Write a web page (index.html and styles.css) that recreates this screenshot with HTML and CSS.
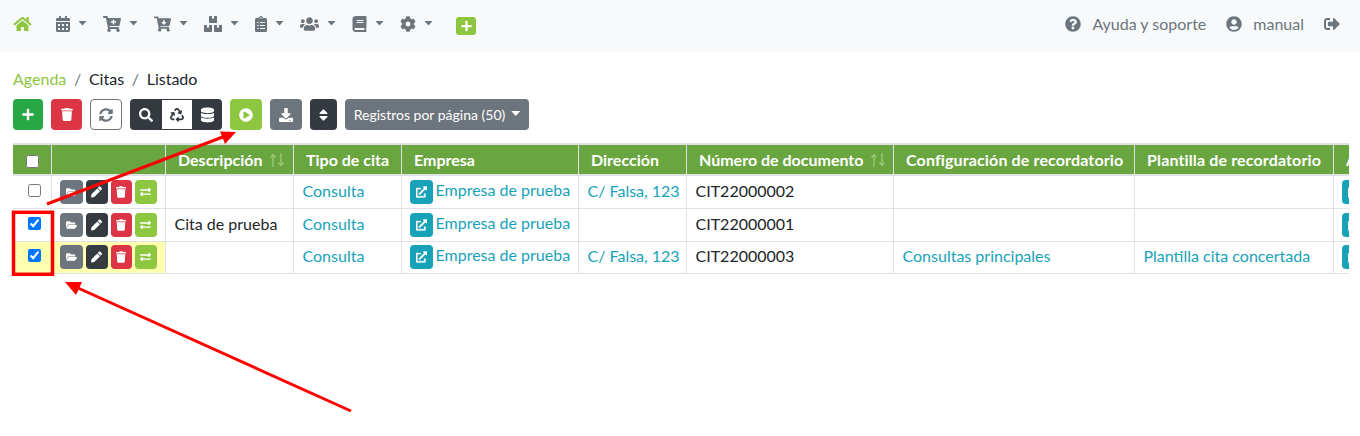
FILE: index.html
```html
<!DOCTYPE html>
<html lang="es">
<head>
<meta charset="utf-8">
<title>Citas</title>
<link rel="stylesheet" href="styles.css">
</head>
<body>
<svg class="defs" width="0" height="0">
<defs>
<symbol id="i-home" viewBox="0 0 576 512"><path d="M280.37 148.26L96 300.11V464a16 16 0 0 0 16 16l112.06-.29a16 16 0 0 0 15.92-16V368a16 16 0 0 1 16-16h64a16 16 0 0 1 16 16v95.64a16 16 0 0 0 16 16.05L464 480a16 16 0 0 0 16-16V300L295.67 148.26a12.19 12.19 0 0 0-15.3 0zM571.6 251.47L488 182.56V44.05a12 12 0 0 0-12-12h-56a12 12 0 0 0-12 12v72.61L318.47 43a48 48 0 0 0-61 0L4.34 251.47a12 12 0 0 0-1.6 16.9l25.5 31A12 12 0 0 0 45.15 301l235.22-193.74a12.19 12.19 0 0 1 15.3 0L530.9 301a12 12 0 0 0 16.9-1.6l25.5-31a12 12 0 0 0-1.7-16.93z"/></symbol>
<symbol id="i-plus" viewBox="0 0 448 512"><path d="M416 208H272V64c0-17.67-14.33-32-32-32h-32c-17.67 0-32 14.33-32 32v144H32c-17.67 0-32 14.33-32 32v32c0 17.67 14.33 32 32 32h144v144c0 17.67 14.33 32 32 32h32c17.67 0 32-14.33 32-32V304h144c17.67 0 32-14.33 32-32v-32c0-17.67-14.33-32-32-32z"/></symbol>
<symbol id="i-trash" viewBox="0 0 448 512"><path d="M432 32H312l-9.4-18.7A24 24 0 0 0 281.1 0H166.8a23.72 23.72 0 0 0-21.4 13.3L136 32H16A16 16 0 0 0 0 48v32a16 16 0 0 0 16 16h416a16 16 0 0 0 16-16V48a16 16 0 0 0-16-16zM53.2 467a48 48 0 0 0 47.9 45h245.8a48 48 0 0 0 47.9-45L416 128H32z"/></symbol>
<symbol id="i-search" viewBox="0 0 512 512"><path d="M505 442.7L405.3 343c-4.5-4.5-10.6-7-17-7H372c27.6-35.3 44-79.7 44-128C416 93.1 322.9 0 208 0S0 93.1 0 208s93.1 208 208 208c48.3 0 92.7-16.4 128-44v16.3c0 6.4 2.5 12.5 7 17l99.7 99.7c9.4 9.4 24.6 9.4 33.9 0l28.3-28.3c9.4-9.4 9.4-24.6.1-34zM208 336c-70.7 0-128-57.2-128-128 0-70.7 57.2-128 128-128 70.7 0 128 57.2 128 128 0 70.7-57.2 128-128 128z"/></symbol>
<symbol id="i-cog" viewBox="0 0 512 512"><path d="M487.4 315.7l-42.6-24.6c4.3-23.2 4.3-47 0-70.2l42.6-24.6c4.9-2.8 7.1-8.6 5.5-14-11.1-35.6-30-67.8-54.7-94.6-3.8-4.1-10-5.1-14.8-2.3L380.8 110c-17.9-15.4-38.5-27.3-60.8-35.1V25.8c0-5.6-3.9-10.5-9.4-11.7-36.7-8.2-74.3-7.8-109.2 0-5.5 1.2-9.4 6.1-9.4 11.7V75c-22.2 7.9-42.8 19.8-60.8 35.1L88.7 85.5c-4.9-2.8-11-1.9-14.8 2.3-24.7 26.7-43.6 58.9-54.7 94.6-1.7 5.4.6 11.2 5.5 14L67.3 221c-4.3 23.2-4.3 47 0 70.2l-42.6 24.6c-4.9 2.8-7.1 8.6-5.5 14 11.1 35.6 30 67.8 54.7 94.6 3.8 4.1 10 5.1 14.8 2.3l42.6-24.6c17.9 15.4 38.5 27.3 60.8 35.1v49.2c0 5.6 3.9 10.5 9.4 11.7 36.7 8.2 74.3 7.8 109.2 0 5.5-1.2 9.4-6.1 9.4-11.7v-49.2c22.2-7.9 42.8-19.8 60.8-35.1l42.6 24.6c4.9 2.8 11 1.9 14.8-2.3 24.7-26.7 43.6-58.9 54.7-94.6 1.5-5.5-.7-11.3-5.6-14.1zM256 336c-44.1 0-80-35.9-80-80s35.9-80 80-80 80 35.9 80 80-35.9 80-80 80z"/></symbol>
<symbol id="i-question" viewBox="0 0 512 512"><path d="M504 256c0 136.997-111.043 248-248 248S8 392.997 8 256C8 119.083 119.043 8 256 8s248 111.083 248 248zM262.655 90c-54.497 0-89.255 22.957-116.549 63.758-3.536 5.286-2.353 12.415 2.715 16.258l34.699 26.31c5.205 3.947 12.621 3.008 16.665-2.122 17.864-22.658 30.113-35.797 57.303-35.797 20.429 0 45.698 13.148 45.698 32.958 0 14.976-12.363 22.667-32.534 33.976C247.128 238.528 216 254.941 216 296v4c0 6.627 5.373 12 12 12h56c6.627 0 12-5.373 12-12v-1.333c0-28.462 83.186-29.647 83.186-106.667 0-58.002-60.165-102-116.531-102zM256 338c-25.365 0-46 20.635-46 46 0 25.364 20.635 46 46 46s46-20.636 46-46c0-25.365-20.635-46-46-46z"/></symbol>
<symbol id="i-user" viewBox="0 0 496 512"><path d="M248 8C111 8 0 119 0 256s111 248 248 248 248-111 248-248S385 8 248 8zm0 96c48.6 0 88 39.4 88 88s-39.4 88-88 88-88-39.4-88-88 39.4-88 88-88zm0 344c-58.7 0-111.3-26.6-146.5-68.2 18.8-35.4 55.6-59.8 98.5-59.8 2.4 0 4.8.4 7.1 1.1 13 4.2 26.6 6.9 40.9 6.9 14.3 0 28-2.7 40.9-6.9 2.3-.7 4.7-1.1 7.1-1.1 42.9 0 79.7 24.4 98.5 59.8C359.3 421.4 306.7 448 248 448z"/></symbol>
<symbol id="i-signout" viewBox="0 0 512 512"><path d="M497 273L329 441c-15 15-41 4.5-41-17v-96H152c-13.3 0-24-10.7-24-24v-96c0-13.3 10.7-24 24-24h136V88c0-21.4 25.9-32 41-17l168 168c9.3 9.4 9.3 24.6 0 34zM192 436v-40c0-6.6-5.4-12-12-12H96c-17.7 0-32-14.3-32-32V160c0-17.7 14.3-32 32-32h84c6.6 0 12-5.4 12-12V76c0-6.6-5.4-12-12-12H96c-53 0-96 43-96 96v192c0 53 43 96 96 96h84c6.6 0 12-5.4 12-12z"/></symbol>
<symbol id="i-exchange" viewBox="0 0 512 512"><path d="M0 168v-16c0-13.255 10.745-24 24-24h360V80c0-21.367 25.899-32.042 40.971-16.971l80 80c9.372 9.373 9.372 24.569 0 33.941l-80 80C409.956 271.982 384 261.456 384 240v-48H24c-13.255 0-24-10.745-24-24zm488 152H128v-48c0-21.314-25.862-32.08-40.971-16.971l-80 80c-9.372 9.373-9.372 24.569 0 33.941l80 80C102.057 463.997 128 453.437 128 432v-48h360c13.255 0 24-10.745 24-24v-16c0-13.255-10.745-24-24-24z"/></symbol>
<symbol id="i-pencil" viewBox="0 0 512 512"><path d="M497.9 142.1l-46.1 46.1c-4.7 4.7-12.3 4.7-17 0l-111-111c-4.7-4.7-4.7-12.3 0-17l46.1-46.1c18.7-18.7 49.1-18.7 67.9 0l60.1 60.1c18.8 18.7 18.8 49.1 0 67.9zM284.2 99.8L21.6 362.4.4 483.9c-2.9 16.4 11.4 30.6 27.8 27.8l121.5-21.3 262.6-262.6c4.7-4.7 4.7-12.3 0-17l-111-111c-4.8-4.7-12.4-4.7-17.1 0z"/></symbol>
<symbol id="i-folder" viewBox="0 0 576 512"><path d="M572.694 292.093L500.27 416.248A63.997 63.997 0 0 1 444.989 448H45.025c-18.523 0-30.064-20.093-20.731-36.093l72.424-124.155A64 64 0 0 1 152 256h399.964c18.523 0 30.064 20.093 20.73 36.093zM152 224h328v-48c0-26.51-21.49-48-48-48H272l-64-64H48C21.49 64 0 85.49 0 112v278.046l69.077-118.418C86.214 242.25 117.989 224 152 224z"/></symbol>
<symbol id="i-link" viewBox="0 0 512 512"><path stroke="currentColor" stroke-width="16" d="M432 320H400a16 16 0 0 0-16 16V448H64V128H208a16 16 0 0 0 16-16V80a16 16 0 0 0-16-16H48A48 48 0 0 0 0 112V464a48 48 0 0 0 48 48H400a48 48 0 0 0 48-48V336A16 16 0 0 0 432 320ZM488 0h-128c-21.37 0-32.05 25.91-17 41l35.73 35.73L135 320.37a24 24 0 0 0 0 34L157.67 377a24 24 0 0 0 34 0L435.28 133.32 471 169c15 15 41 4.5 41-17V24A24 24 0 0 0 488 0Z"/></symbol>
<symbol id="i-sync" viewBox="0 0 512 512"><path d="M370.72 133.28C339.458 104.008 298.888 87.962 255.848 88c-77.458.068-144.328 53.178-162.791 126.85-1.344 5.363-6.122 9.15-11.651 9.15H24.103c-7.498 0-13.194-6.807-11.807-14.176C33.933 94.924 134.813 8 256 8c66.448 0 126.791 26.136 171.315 68.685L463.03 40.97C478.149 25.851 504 36.559 504 57.941V192c0 13.255-10.745 24-24 24H345.941c-21.382 0-32.09-25.851-16.971-40.971l41.75-41.749zM32 296h134.059c21.382 0 32.09 25.851 16.971 40.971l-41.75 41.75c31.262 29.273 71.835 45.319 114.876 45.28 77.418-.07 144.315-53.144 162.787-126.849 1.344-5.363 6.122-9.15 11.651-9.15h57.304c7.498 0 13.194 6.807 11.807 14.176C478.067 417.076 377.187 504 256 504c-66.448 0-126.791-26.136-171.315-68.685L48.97 471.03C33.851 486.149 8 475.441 8 454.059V320c0-13.255 10.745-24 24-24z"/></symbol>
<symbol id="i-play" viewBox="0 0 512 512"><path d="M256 8C119 8 8 119 8 256s111 248 248 248 248-111 248-248S393 8 256 8zm115.7 272l-176 101c-15.8 8.8-35.7-2.5-35.7-21V152c0-18.4 19.8-29.8 35.7-21l176 107c16.4 9.2 16.4 32.9 0 42z"/></symbol>
<symbol id="i-db" viewBox="0 0 448 512"><path d="M448 73.143v45.714C448 159.143 347.667 192 224 192S0 159.143 0 118.857V73.143C0 32.857 100.333 0 224 0s224 32.857 224 73.143zM448 176v102.857C448 319.143 347.667 352 224 352S0 319.143 0 278.857V176c48.125 33.143 136.208 48.572 224 48.572S399.874 209.143 448 176zm0 160v102.857C448 479.143 347.667 512 224 512S0 479.143 0 438.857V336c48.125 33.143 136.208 48.572 224 48.572S399.874 369.143 448 336z"/></symbol>
<symbol id="i-download" viewBox="0 0 512 512"><path d="M216 0h80c13.3 0 24 10.7 24 24v168h87.7c17.8 0 26.7 21.5 14.1 34.1L269.7 378.3c-7.5 7.5-19.8 7.5-27.3 0L90.1 226.1c-12.6-12.6-3.7-34.1 14.1-34.1H192V24c0-13.3 10.7-24 24-24zm296 376v112c0 13.3-10.7 24-24 24H24c-13.3 0-24-10.7-24-24V376c0-13.3 10.7-24 24-24h146.7l49 49c20.1 20.1 52.5 20.1 72.6 0l49-49H488c13.3 0 24 10.7 24 24zm-124 88c0-11-9-20-20-20s-20 9-20 20 9 20 20 20 20-9 20-20zm64 0c0-11-9-20-20-20s-20 9-20 20 9 20 20 20 20-9 20-20z"/></symbol>
<symbol id="i-sort" viewBox="0 0 320 512"><path d="M41 288h238c21.4 0 32.1 25.9 17 41L177 448c-9.4 9.4-24.6 9.4-33.9 0L24 329c-15.1-15.1-4.4-41 17-41zm255-105L177 64c-9.4-9.4-24.6-9.4-33.9 0L24 183c-15.1 15.1-4.4 41 17 41h238c21.4 0 32.1-25.9 17-41z"/></symbol>
<symbol id="i-users" viewBox="0 0 640 512"><path d="M96 224c35.3 0 64-28.7 64-64s-28.7-64-64-64-64 28.7-64 64 28.7 64 64 64zm448 0c35.3 0 64-28.7 64-64s-28.7-64-64-64-64 28.7-64 64 28.7 64 64 64zm32 32h-64c-17.6 0-33.5 7.1-45.1 18.6 40.3 22.1 68.9 62 75.1 109.4h66c17.7 0 32-14.3 32-32v-32c0-35.3-28.7-64-64-64zm-256 0c61.9 0 112-50.1 112-112S381.9 32 320 32 208 82.1 208 144s50.1 112 112 112zm76.8 32h-8.3c-20.8 10-43.9 16-68.5 16s-47.6-6-68.5-16h-8.3C179.6 288 128 339.6 128 403.2V432c0 26.5 21.5 48 48 48h288c26.5 0 48-21.5 48-48v-28.8c0-63.6-51.6-115.2-115.2-115.2zm-223.7-13.4C161.5 263.1 145.6 256 128 256H64c-35.3 0-64 28.7-64 64v32c0 17.7 14.3 32 32 32h65.9c6.3-47.4 34.9-87.3 75.2-109.4z"/></symbol>
<symbol id="i-book" viewBox="0 0 448 512"><path d="M448 360V24c0-13.3-10.7-24-24-24H96C43 0 0 43 0 96v320c0 53 43 96 96 96h328c13.3 0 24-10.7 24-24v-16c0-7.5-3.5-14.3-8.9-18.7-4.2-15.4-4.2-59.3 0-74.7 5.4-4.3 8.9-11.1 8.9-18.6zM128 134c0-3.3 2.7-6 6-6h212c3.3 0 6 2.7 6 6v20c0 3.3-2.7 6-6 6H134c-3.3 0-6-2.7-6-6v-20zm0 64c0-3.3 2.7-6 6-6h212c3.3 0 6 2.7 6 6v20c0 3.3-2.7 6-6 6H134c-3.3 0-6-2.7-6-6v-20zm253.4 250H96c-17.7 0-32-14.3-32-32 0-17.6 14.4-32 32-32h285.4c-1.9 17.1-1.9 46.9 0 64z"/></symbol>
<symbol id="i-clip" viewBox="0 0 384 512"><path d="M336 64h-80c0-35.3-28.7-64-64-64s-64 28.7-64 64H48C21.5 64 0 85.5 0 112v352c0 26.5 21.5 48 48 48h288c26.5 0 48-21.5 48-48V112c0-26.5-21.5-48-48-48zM96 424c-13.3 0-24-10.7-24-24s10.7-24 24-24 24 10.7 24 24-10.7 24-24 24zm0-96c-13.3 0-24-10.7-24-24s10.7-24 24-24 24 10.7 24 24-10.7 24-24 24zm0-96c-13.3 0-24-10.7-24-24s10.7-24 24-24 24 10.7 24 24-10.7 24-24 24zm96-192c13.3 0 24 10.7 24 24s-10.7 24-24 24-24-10.7-24-24 10.7-24 24-24zm128 368c0 4.4-3.6 8-8 8H168c-4.4 0-8-3.6-8-8v-16c0-4.4 3.6-8 8-8h144c4.4 0 8 3.6 8 8v16zm0-96c0 4.4-3.6 8-8 8H168c-4.4 0-8-3.6-8-8v-16c0-4.4 3.6-8 8-8h144c4.4 0 8 3.6 8 8v16zm0-96c0 4.4-3.6 8-8 8H168c-4.4 0-8-3.6-8-8v-16c0-4.4 3.6-8 8-8h144c4.4 0 8 3.6 8 8v16z"/></symbol>
<symbol id="i-cal" viewBox="0 0 448 512"><path d="M0 464c0 26.5 21.5 48 48 48h352c26.5 0 48-21.5 48-48V192H0v272zm320-196c0-6.6 5.4-12 12-12h40c6.6 0 12 5.4 12 12v40c0 6.6-5.4 12-12 12h-40c-6.6 0-12-5.4-12-12v-40zm0 128c0-6.6 5.4-12 12-12h40c6.6 0 12 5.4 12 12v40c0 6.6-5.4 12-12 12h-40c-6.6 0-12-5.4-12-12v-40zM192 268c0-6.6 5.4-12 12-12h40c6.6 0 12 5.4 12 12v40c0 6.6-5.4 12-12 12h-40c-6.6 0-12-5.4-12-12v-40zm0 128c0-6.6 5.4-12 12-12h40c6.6 0 12 5.4 12 12v40c0 6.6-5.4 12-12 12h-40c-6.6 0-12-5.4-12-12v-40zM64 268c0-6.6 5.4-12 12-12h40c6.6 0 12 5.4 12 12v40c0 6.6-5.4 12-12 12H76c-6.6 0-12-5.4-12-12v-40zm0 128c0-6.6 5.4-12 12-12h40c6.6 0 12 5.4 12 12v40c0 6.6-5.4 12-12 12H76c-6.6 0-12-5.4-12-12v-40zM400 64h-48V16c0-8.8-7.2-16-16-16h-32c-8.8 0-16 7.2-16 16v48H160V16c0-8.8-7.2-16-16-16h-32c-8.8 0-16 7.2-16 16v48H48C21.5 64 0 85.5 0 112v48h448v-48c0-26.5-21.5-48-48-48z"/></symbol>
<symbol id="i-cartplus" viewBox="0 0 576 512"><path d="M504.717 320H211.572l6.545 32h268.418c15.401 0 26.816 14.301 23.403 29.319l-5.517 24.276C523.112 414.668 536 433.828 536 456c0 31.202-25.519 56.444-56.824 55.994-29.823-.429-54.35-24.631-55.155-54.447-.44-16.287 6.085-31.049 16.803-41.548H231.176C241.553 426.165 248 440.326 248 456c0 31.813-26.528 57.431-58.67 55.938-28.54-1.325-51.751-24.385-53.251-52.917-1.158-22.034 10.436-41.455 28.051-51.586L93.883 64H24C10.745 64 0 53.255 0 40V24C0 10.745 10.745 0 24 0h102.529c11.401 0 21.228 8.021 23.513 19.19L159.208 64H551.99c15.401 0 26.816 14.301 23.403 29.319l-47.273 208C525.637 312.246 515.923 320 504.717 320zM408 168h-48v-40c0-8.837-7.163-16-16-16h-16c-8.837 0-16 7.163-16 16v40h-48c-8.837 0-16 7.163-16 16v16c0 8.837 7.163 16 16 16h48v40c0 8.837 7.163 16 16 16h16c8.837 0 16-7.163 16-16v-40h48c8.837 0 16-7.163 16-16v-16c0-8.837-7.163-16-16-16z"/></symbol>
<symbol id="i-cartdown" viewBox="0 0 576 512"><path d="M504.717 320H211.572l6.545 32h268.418c15.401 0 26.816 14.301 23.403 29.319l-5.517 24.276C523.112 414.668 536 433.828 536 456c0 31.202-25.519 56.444-56.824 55.994-29.823-.429-54.35-24.631-55.155-54.447-.44-16.287 6.085-31.049 16.803-41.548H231.176C241.553 426.165 248 440.326 248 456c0 31.813-26.528 57.431-58.67 55.938-28.54-1.325-51.751-24.385-53.251-52.917-1.158-22.034 10.436-41.455 28.051-51.586L93.883 64H24C10.745 64 0 53.255 0 40V24C0 10.745 10.745 0 24 0h102.529c11.401 0 21.228 8.021 23.513 19.19L159.208 64H551.99c15.401 0 26.816 14.301 23.403 29.319l-47.273 208C525.637 312.246 515.923 320 504.717 320zM403.029 192H360v-60c0-6.627-5.373-12-12-12h-24c-6.627 0-12 5.373-12 12v60h-43.029c-10.691 0-16.045 12.926-8.485 20.485l67.029 67.029c4.686 4.686 12.284 4.686 16.971 0l67.029-67.029c7.559-7.559 2.205-20.485-8.486-20.485z"/></symbol>
<symbol id="i-boxes" viewBox="0 0 576 512"><path d="M560 288h-80v96l-32-21.3-32 21.3v-96h-80c-8.8 0-16 7.2-16 16v192c0 8.8 7.2 16 16 16h224c8.8 0 16-7.2 16-16V304c0-8.8-7.2-16-16-16zm-384-64h224c8.8 0 16-7.2 16-16V16c0-8.8-7.2-16-16-16h-80v96l-32-21.3L256 96V0h-80c-8.8 0-16 7.2-16 16v192c0 8.8 7.2 16 16 16zm64 64h-80v96l-32-21.3L96 384v-96H16c-8.8 0-16 7.2-16 16v192c0 8.8 7.2 16 16 16h224c8.8 0 16-7.2 16-16V304c0-8.8-7.2-16-16-16z"/></symbol>
<symbol id="i-recycle" viewBox="0 0 512 512"><path d="M184.561 261.903c3.232 13.997-12.123 24.635-24.068 17.168l-40.736-25.455-50.867 81.402C55.606 356.273 70.96 384 96.012 384H148c6.627 0 12 5.373 12 12v40c0 6.627-5.373 12-12 12H96.115c-75.334 0-121.302-83.048-81.408-146.88l50.822-81.388-40.725-25.448c-12.081-7.547-8.966-25.961 4.879-29.158l110.237-25.45c8.611-1.988 17.201 3.381 19.189 11.99l25.452 110.237zm98.561-182.915l41.289 66.076-40.74 25.457c-12.051 7.528-9 25.953 4.879 29.158l110.237 25.45c8.672 1.999 17.215-3.438 19.189-11.99l25.45-110.237c3.197-13.844-11.99-24.719-24.068-17.168l-40.687 25.424-41.263-66.082c-37.521-60.033-125.209-60.171-162.816 0l-17.963 28.766c-3.51 5.62-1.8 13.021 3.82 16.533l33.919 21.195c5.62 3.512 13.024 1.803 16.536-3.817l17.961-28.743c12.712-20.341 41.973-19.676 54.257-.022zM497.288 301.12l-27.515-44.065c-3.511-5.623-10.916-7.334-16.538-3.821l-33.861 21.159c-5.62 3.512-7.33 10.915-3.818 16.536l27.564 44.112c13.257 21.211-2.057 48.96-27.136 48.96H320V336.02c0-14.213-17.242-21.383-27.313-11.313l-80 79.981c-6.249 6.248-6.249 16.379 0 22.627l80 79.989C302.689 517.308 320 510.3 320 495.989V448h95.88c75.274 0 121.335-82.997 81.408-146.88z"/></symbol>
<symbol id="i-updown" viewBox="0 0 16 16"><path d="M4 15V3M1.500 5.500L4 2.500l2.500 3M12 1v12M9.500 10.500l2.500 3 2.500-3" fill="none" stroke="currentColor" stroke-width="1.300"/></symbol>
</defs>
</svg>

<nav class="navbar">
  <a class="nav-home"><svg class="ic w19 green"><use href="#i-home"/></svg></a>
  <a class="nav-item"><svg class="ic w14"><use href="#i-cal"/></svg><span class="caret"></span></a>
  <a class="nav-item"><svg class="ic w18"><use href="#i-cartplus"/></svg><span class="caret"></span></a>
  <a class="nav-item"><svg class="ic w17"><use href="#i-cartdown"/></svg><span class="caret"></span></a>
  <a class="nav-item"><svg class="ic w18"><use href="#i-boxes"/></svg><span class="caret"></span></a>
  <a class="nav-item"><svg class="ic w12t"><use href="#i-clip"/></svg><span class="caret"></span></a>
  <a class="nav-item"><svg class="ic w19"><use href="#i-users"/></svg><span class="caret"></span></a>
  <a class="nav-item"><svg class="ic w15"><use href="#i-book"/></svg><span class="caret"></span></a>
  <a class="nav-item"><svg class="ic w16"><use href="#i-cog"/></svg><span class="caret"></span></a>
  <a class="nav-add"><svg class="ic w11 white"><use href="#i-plus"/></svg></a>
  <div class="nav-right">
    <a class="nav-link"><svg class="ic w16"><use href="#i-question"/></svg><span>Ayuda y soporte</span></a>
    <a class="nav-link"><svg class="ic w16"><use href="#i-user"/></svg><span>manual</span></a>
    <a class="nav-out"><svg class="ic w16"><use href="#i-signout"/></svg></a>
  </div>
</nav>

<main class="content">
  <ol class="breadcrumb">
    <li class="crumb-first">Agenda</li>
    <li>Citas</li>
    <li>Listado</li>
  </ol>

  <div class="toolbar">
    <button class="btn btn-success b30"><svg class="ic w12"><use href="#i-plus"/></svg></button>
    <button class="btn btn-danger b31"><svg class="ic w12"><use href="#i-trash"/></svg></button>
    <button class="btn btn-outline b32"><svg class="ic w14"><use href="#i-sync"/></svg></button>
    <div class="btn-group">
      <button class="btn btn-dark b32"><svg class="ic w14"><use href="#i-search"/></svg></button>
      <button class="btn btn-light b30"><svg class="ic w14"><use href="#i-recycle"/></svg></button>
      <button class="btn btn-dark b30"><svg class="ic w13"><use href="#i-db"/></svg></button>
    </div>
    <button class="btn btn-lime b32"><svg class="ic w14"><use href="#i-play"/></svg></button>
    <button class="btn btn-gray b32"><svg class="ic w14"><use href="#i-download"/></svg></button>
    <button class="btn btn-dark b27"><svg class="ic w9"><use href="#i-sort"/></svg></button>
    <button class="btn btn-gray btn-text">Registros por página (50)<span class="caret caret-white"></span></button>
  </div>

  <div class="table-wrap">
    <table class="grid">
      <colgroup>
        <col class="c1"><col class="c2"><col class="c3"><col class="c4"><col class="c5"><col class="c6"><col class="c7"><col class="c8"><col class="c9"><col class="c10">
      </colgroup>
      <thead>
        <tr>
          <th class="th-check"><input type="checkbox" class="check"></th>
          <th></th>
          <th>Descripción <svg class="sorter"><use href="#i-updown"/></svg></th>
          <th>Tipo de cita</th>
          <th>Empresa</th>
          <th>Dirección</th>
          <th>Número de documento <svg class="sorter"><use href="#i-updown"/></svg></th>
          <th class="th-wide">Configuración de recordatorio</th>
          <th class="th-wide">Plantilla de recordatorio</th>
          <th>Acciones</th>
        </tr>
      </thead>
      <tbody>
        <tr class="row1">
          <td class="td-check"><input type="checkbox" class="check"></td>
          <td><div class="acts"><span class="act a-gray"><svg class="ic w11"><use href="#i-folder"/></svg></span><span class="act a-dark"><svg class="ic w11"><use href="#i-pencil"/></svg></span><span class="act a-red"><svg class="ic w10"><use href="#i-trash"/></svg></span><span class="act a-lime"><svg class="ic w11"><use href="#i-exchange"/></svg></span></div></td>
          <td></td>
          <td><a class="lnk">Consulta</a></td>
          <td><div class="co"><span class="act a-info"><svg class="ic w11"><use href="#i-link"/></svg></span><a class="lnk lnk-up">Empresa de prueba</a></div></td>
          <td><a class="lnk">C/ Falsa, 123</a></td>
          <td>CIT22000002</td>
          <td></td>
          <td></td>
          <td><span class="act a-info"><svg class="ic w11"><use href="#i-link"/></svg></span></td>
        </tr>
        <tr class="row2">
          <td class="td-check"><input type="checkbox" class="check" checked></td>
          <td><div class="acts"><span class="act a-gray"><svg class="ic w11"><use href="#i-folder"/></svg></span><span class="act a-dark"><svg class="ic w11"><use href="#i-pencil"/></svg></span><span class="act a-red"><svg class="ic w10"><use href="#i-trash"/></svg></span><span class="act a-lime"><svg class="ic w11"><use href="#i-exchange"/></svg></span></div></td>
          <td>Cita de prueba</td>
          <td><a class="lnk">Consulta</a></td>
          <td><div class="co"><span class="act a-info"><svg class="ic w11"><use href="#i-link"/></svg></span><a class="lnk lnk-up">Empresa de prueba</a></div></td>
          <td></td>
          <td>CIT22000001</td>
          <td></td>
          <td></td>
          <td><span class="act a-info"><svg class="ic w11"><use href="#i-link"/></svg></span></td>
        </tr>
        <tr class="row3">
          <td class="td-check hl"><input type="checkbox" class="check" checked></td>
          <td class="hl"><div class="acts"><span class="act a-gray"><svg class="ic w11"><use href="#i-folder"/></svg></span><span class="act a-dark"><svg class="ic w11"><use href="#i-pencil"/></svg></span><span class="act a-red"><svg class="ic w10"><use href="#i-trash"/></svg></span><span class="act a-lime"><svg class="ic w11"><use href="#i-exchange"/></svg></span></div></td>
          <td></td>
          <td><a class="lnk">Consulta</a></td>
          <td><div class="co"><span class="act a-info"><svg class="ic w11"><use href="#i-link"/></svg></span><a class="lnk lnk-up">Empresa de prueba</a></div></td>
          <td><a class="lnk">C/ Falsa, 123</a></td>
          <td>CIT22000003</td>
          <td><a class="lnk">Consultas principales</a></td>
          <td><a class="lnk">Plantilla cita concertada</a></td>
          <td><span class="act a-info"><svg class="ic w11"><use href="#i-link"/></svg></span></td>
        </tr>
      </tbody>
    </table>
  </div>
</main>

<svg class="annot" viewBox="0 0 1360 436" width="1360" height="436">
  <rect x="13.500" y="212.300" width="39" height="62" fill="none" stroke="#f00" stroke-width="3.500"/>
  <path d="M47 204L224 136.500" stroke="#f00" stroke-width="3" fill="none"/>
  <path d="M236 132L220 131.500L225 144Z" fill="#f00"/>
  <path d="M351 411L78 288" stroke="#f00" stroke-width="3" fill="none"/>
  <path d="M65 282L82 282L76 295Z" fill="#f00"/>
</svg>
</body>
</html>
```

FILE: styles.css
```css
* { box-sizing: border-box; }
html, body { margin: 0; padding: 0; }
body {
  width: 1360px;
  height: 436px;
  overflow: hidden;
  position: relative;
  background: #fff;
  color: #212529;
  font-family: Lato, "Liberation Sans", sans-serif;
  font-size: 16px;
}
.defs { position: absolute; }
.ic { display: block; height: 16px; fill: currentColor; flex: none; }
.w9 { width: 9px; } .w10 { width: 10px; height: 12px; } .w11 { width: 11px; height: 12px; }
.w12 { width: 12px; height: 13px; } .w12t { width: 12px; } .w13 { width: 13px; } .w14 { width: 14px; }
.w15 { width: 15px; } .w16 { width: 16px; } .w17 { width: 17px; } .w18 { width: 18px; } .w19 { width: 19px; } .w20 { width: 20px; }
.green { color: #8dc63f; }
.white { color: #fff; }

.navbar {
  height: 52px;
  background: #f8f9fa;
  display: flex;
  align-items: center;
  padding: 0 20px 4px 13px;
  color: #6c757d;
}
.nav-home { margin-right: 24px; }
.nav-item { display: flex; align-items: center; margin-right: 16px; }
.caret {
  display: inline-block;
  margin-left: 8px;
  width: 9px;
  height: 5px;
  background: #6c757d;
  clip-path: polygon(0 0, 100% 0, 50% 100%);
  margin-top: -2px;
}
.nav-add {
  margin-left: 7px;
  width: 20px;
  height: 18px;
  margin-top: 4px;
  background: #8dc63f;
  border-radius: 3px;
  display: flex;
  align-items: center;
  justify-content: center;
}
.nav-right { margin-left: auto; display: flex; align-items: center; }
.nav-link { display: flex; align-items: center; gap: 11px; margin-right: 20px; font-size: 16px; }
.nav-link span { margin-top: -2px; }

.content { padding: 0 13px; }
.breadcrumb {
  list-style: none;
  margin: 0;
  padding: 17px 0 0;
  height: 47px;
  display: flex;
  line-height: 19px;
  font-size: 16px;
}
.breadcrumb li + li::before { content: "/"; color: #6c757d; padding: 0 7.700px; }
.crumb-first { color: #8dc63f; }

.toolbar { display: flex; gap: 8px; height: 31px; }
.btn {
  border: 0;
  height: 31px;
  padding: 0;
  border-radius: 4px;
  display: flex;
  align-items: center;
  justify-content: center;
  color: #fff;
  font: inherit;
}
.b27 { width: 27px; } .b30 { width: 30px; } .b31 { width: 31px; } .b32 { width: 32px; }
.btn-success { background: #28a745; }
.btn-danger { background: #dc3545; }
.btn-outline { background: #fff; border: 1px solid #6c757d; color: #6c757d; }
.btn-dark { background: #343a40; }
.btn-light { background: #fff; color: #343a40; border-radius: 0; border-top: 1px solid #343a40; border-bottom: 1px solid #343a40; }
.btn-lime { background: #8dc63f; }
.btn-gray { background: #6c757d; }
.btn-text { width: 184px; font-size: 14px; }
.caret-white { background: #fff; margin-left: 6px; }
.btn-group { display: flex; }
.btn-group .btn:first-child { border-radius: 4px 0 0 4px; }
.btn-group .btn:last-child { border-radius: 0 4px 4px 0; }

.table-wrap { margin-top: 13px; width: 1336px; overflow: hidden; }
.grid {
  border-collapse: collapse;
  table-layout: fixed;
  width: 1500px;
}
.c1 { width: 38px; } .c2 { width: 114px; } .c3 { width: 128px; } .c4 { width: 108px; }
.c5 { width: 177px; } .c6 { width: 108px; } .c7 { width: 207px; } .c8 { width: 241px; }
.c9 { width: 199px; } .c10 { width: 180px; }
.grid th {
  background: #6aa63f;
  color: #fff;
  height: 31px;
  padding: 0 12px 0 12.500px;
  text-align: left;
  font-weight: 700;
  font-size: 16px;
  white-space: nowrap;
  border-top: 2px solid #dee2e6;
  border-bottom: 2px solid #dee2e6;
  border-left: 1px solid #dee2e6;
  border-right: 1px solid #dee2e6;
}
.grid .th-wide { letter-spacing: .14px; }
.grid td {
  height: 32px;
  padding: 4px 8px 0 9px;
  border: 1px solid #dee2e6;
  white-space: nowrap;
  vertical-align: top;
  font-size: 16px;
  line-height: 22px;
}
.grid tbody td:first-child { border-left: 0; }
.grid thead th:first-child { border-left: 0; }
.grid td:last-child { padding-left: 8px; }
.row1 td, .row2 td { height: 33px; }
.grid .row3 td { padding-top: 3px; }
.grid .th-check { padding: 0 0 0 2px; text-align: center; }
.grid .td-check { padding-left: 6px; padding-right: 0; }
.check { margin: 0; vertical-align: middle; width: 13px; height: 13px; }
.td-check .check { display: block; margin: 4px auto 0; }
.hl { background: #ffffb0; }
.sorter { width: 16px; height: 16px; vertical-align: -2px; color: #9cc87d; display: inline-block; margin-left: 3px; }
.acts { display: flex; gap: 3px; margin-left: -1px; }
.act {
  display: inline-flex;
  align-items: center;
  justify-content: center;
  width: 22px;
  height: 24px;
  border-radius: 4px;
  color: #fff;
  flex: none;
  vertical-align: top;
}
.a-gray { background: #6c757d; width: 23px; }
.a-dark { background: #343a40; }
.a-red { background: #dc3545; width: 21px; }
.a-lime { background: #8dc63f; }
.a-info { background: #17a2b8; width: 23px; }
.lnk { color: #17a2b8; }
.co { display: flex; align-items: flex-start; gap: 3px; margin-left: -1px; }
.lnk-up { margin-top: -1px; }
.annot { position: absolute; left: 0; top: 0; pointer-events: none; }
```
